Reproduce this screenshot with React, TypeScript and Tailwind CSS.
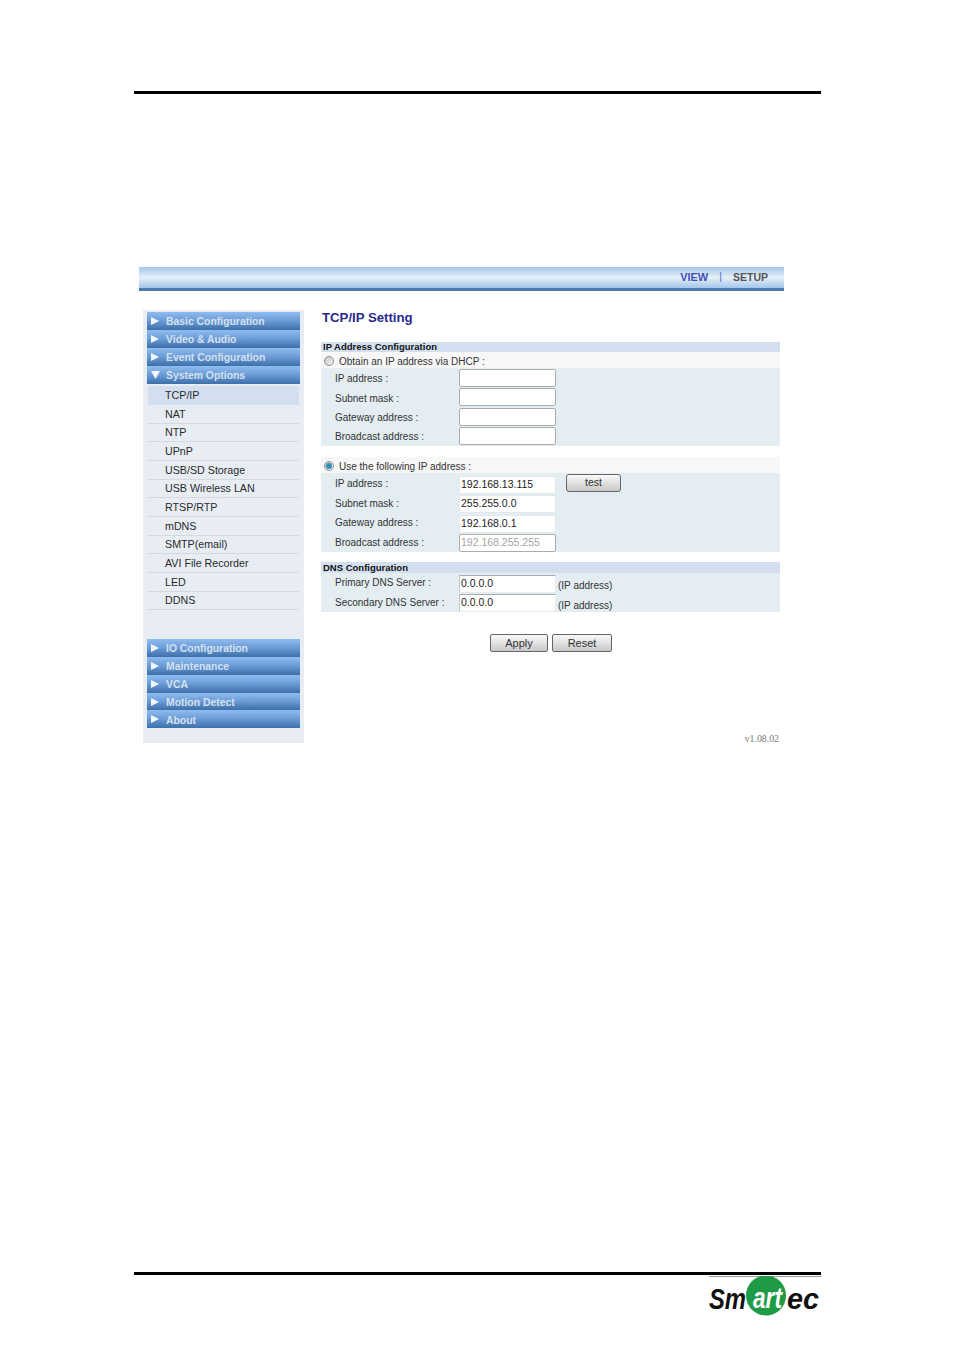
import React from 'react';

const topMenus = ['Basic Configuration', 'Video & Audio', 'Event Configuration'];
const subMenus = ['NAT', 'NTP', 'UPnP', 'USB/SD Storage', 'USB Wireless LAN', 'RTSP/RTP', 'mDNS', 'SMTP(email)', 'AVI File Recorder', 'LED', 'DDNS'];
const bottomMenus = ['IO Configuration', 'Maintenance', 'VCA', 'Motion Detect', 'About'];

const MenuHeader: React.FC<{ label: string; open?: boolean; short?: boolean }> = ({ label, open, short }) => (
  <div className={`flex items-center ${short ? 'h-[17.8px]' : 'h-[18px]'} w-[153px] pl-1 bg-gradient-to-b from-[#8fbcf0] via-[#6b9bd6] to-[#3d6fa9] text-[10.4px] font-bold text-[#d5e1ef]`}>
    {open ? (
      <svg width="9" height="8" viewBox="0 0 9 8" className="mr-[6px]"><path d="M0 0h9L4.5 8z" fill="#f2f6fb" /></svg>
    ) : (
      <svg width="8" height="8" viewBox="0 0 8 8" className="mr-[7px]"><path d="M0 0l8 4-8 4z" fill="#f2f6fb" /></svg>
    )}
    <span className="pt-[2px]">{label}</span>
  </div>
);

const Radio: React.FC<{ checked?: boolean }> = ({ checked }) => (
  <span className="flex items-center justify-center w-[10px] h-[10px] rounded-full border border-[#8a8f94] bg-gradient-to-br from-[#c4c8cc] to-[#f4f4f4] mr-[5px] ml-[3px] mt-[1px]">
    {checked && <span className="w-[6px] h-[6px] rounded-full bg-[#2f8fb8]" />}
  </span>
);

const Field: React.FC<{ label: string; value?: string; kind?: 'plain' | 'line' | 'boxed' | 'disabled'; labelClass?: string }> = ({ label, value, kind = 'boxed', labelClass = '' }) => {
  const styles = {
    boxed: 'border border-[#a9adaf] rounded-[2px] text-[#222]',
    disabled: 'border border-[#a9adaf] rounded-[2px] text-[#a5a5a5]',
    plain: 'border border-[#e3e8ea] text-[#222]',
    line: 'border border-[#e6ebed] border-t-[#a9adaf] border-l-[#c3c7c9] text-[#222]',
  };
  return (
    <div className="flex items-center h-[19.5px]">
      <span className={`w-[138px] pl-[14px] text-[10px] text-[#333] ${labelClass}`}>{label}</span>
      <div className={`flex items-center w-[97px] h-[18px] pl-[1px] bg-white ${styles[kind]}`}>{value}</div>
    </div>
  );
};

const SmartecLogo: React.FC = () => (
  <svg width="112" height="40" viewBox="0 0 112 40">
    <line x1="0" y1="0.5" x2="112" y2="0.5" stroke="#9a9a9a" strokeWidth="1" />
    <circle cx="57" cy="19.5" r="20" fill="#1f9a45" />
    <g fontFamily="'Liberation Sans', sans-serif" fontWeight="700" fontStyle="italic" fontSize="30">
      <text x="0" y="33" textLength="37" lengthAdjust="spacingAndGlyphs" fill="#111">Sm</text>
      <text x="44" y="32" textLength="29" lengthAdjust="spacingAndGlyphs" fill="#fff">art</text>
      <text x="78" y="33" textLength="32" lengthAdjust="spacingAndGlyphs" fill="#111">ec</text>
    </g>
  </svg>
);

const App: React.FC = () => {
  return (
    <div className="w-[954px] h-[1350px] bg-white overflow-hidden font-['Liberation_Sans',sans-serif] text-[10.5px]">
      <div className="ml-[134px] mt-[91px] w-[687px] h-[3px] bg-black" />

      <div className="ml-[139px] mt-[173px] w-[645px] h-[24px] flex items-center justify-end pr-4 pb-[1px] border-b-[3px] border-[#4a7bb0] bg-gradient-to-b from-[#a4c4e8] via-[#e6eff8] to-[#a4c5ea] text-[10.5px] font-bold">
        <span className="text-[#3f4fb5] text-[11px]">VIEW</span>
        <span className="mx-[11px] text-[#3f6fc0] font-normal">|</span>
        <span className="text-[#555] pt-[2px]">SETUP</span>
      </div>

      <div className="ml-[143px] mt-[19px] flex items-start">
        <aside className="w-[161px] h-[433px] bg-[#e8edf4] pl-1 pt-[2px]">
          {topMenus.map((m) => <MenuHeader key={m} label={m} />)}
          <MenuHeader label="System Options" open />
          <div className="w-[151px] ml-px mt-[2px] text-[#2a2a2a] text-[10.7px]">
            <div className="h-[19px] flex items-center pl-[17px] bg-[#d3dfee]">TCP/IP</div>
            {subMenus.map((s) => (
              <div key={s} className="h-[18.67px] flex items-center pl-[17px] border-b border-[#d5d8dc]">{s}</div>
            ))}
          </div>
          <div className="mt-[29px]">
            {bottomMenus.map((m) => <MenuHeader key={m} label={m} short />)}
          </div>
        </aside>

        <main className="ml-[17px] w-[459px]">
          <h1 className="pl-px h-[32px] pt-[1px] text-[13.2px] leading-[14px] font-bold text-[#2b2b8c]">TCP/IP Setting</h1>

          <div className="h-[10px] pl-[2px] bg-[#d3dfee] text-[9.5px] leading-[10px] font-bold text-[#111]">IP Address Configuration</div>
          <div className="h-[16px] flex items-center bg-[#f7f7f7] text-[10px] text-[#333]"><Radio /><span className="mt-[3px]">Obtain an IP address via DHCP :</span></div>
          <div className="h-[78px] bg-[#e3edf2]">
            <Field label="IP address :" labelClass="pt-[2px]" />
            <Field label="Subnet mask :" labelClass="pt-[2px]" />
            <Field label="Gateway address :" labelClass="pt-[2px]" />
            <Field label="Broadcast address :" labelClass="pt-[1px]" />
          </div>

          <div className="mt-[11px] h-[16px] flex items-center bg-[#f7f7f7] text-[10px] text-[#333]"><Radio checked /><span className="mt-[3px]">Use the following IP address :</span></div>
          <div className="h-[79px] pt-[2px] bg-[#e3edf2]">
            <div className="flex items-start">
              <Field label="IP address :" value="192.168.13.115" kind="plain" labelClass="pb-[2px]" />
              <button className="ml-[10px] -mt-px w-[55px] h-[18px] rounded-[3px] border border-[#666] bg-gradient-to-b from-[#fafafa] to-[#c8c8c8] text-[#333]">test</button>
            </div>
            <Field label="Subnet mask :" value="255.255.0.0" kind="plain" labelClass="pb-[2px]" />
            <Field label="Gateway address :" value="192.168.0.1" kind="plain" labelClass="pb-[2px]" />
            <Field label="Broadcast address :" value="192.168.255.255" kind="disabled" labelClass="pb-[2px]" />
          </div>

          <div className="mt-[10px] h-[11px] pl-[2px] bg-[#d3dfee] text-[9.5px] leading-[11px] font-bold text-[#111]">DNS Configuration</div>
          <div className="h-[39px] pt-px bg-[#e3edf2]">
            <div className="flex items-start">
              <Field label="Primary DNS Server :" value="0.0.0.0" kind="line" labelClass="pb-[2px]" />
              <span className="ml-[2px] mt-[4px] text-[10px] text-[#333]">(IP address)</span>
            </div>
            <div className="flex items-start">
              <Field label="Secondary DNS Server :" value="0.0.0.0" kind="line" labelClass="pb-[2px]" />
              <span className="ml-[2px] mt-[4px] text-[10px] text-[#333]">(IP address)</span>
            </div>
          </div>

          <div className="mt-[22px] pl-[169px] flex gap-1 text-[11px] text-[#333]">
            <button className="w-[58px] h-[18px] rounded-[2px] border border-[#666] bg-gradient-to-b from-[#fafafa] to-[#c8c8c8]">Apply</button>
            <button className="w-[60px] h-[18px] rounded-[2px] border border-[#666] bg-gradient-to-b from-[#fafafa] to-[#c8c8c8]">Reset</button>
          </div>

          <p className="mt-[81px] pr-px text-right font-['Liberation_Serif',serif] text-[9.8px] leading-[12px] text-[#777]">v1.08.02</p>
        </main>
      </div>

      <div className="ml-[134px] mt-[527px] w-[687px] h-[3px] bg-black" />
      <div className="ml-[709px] mt-px">
        <SmartecLogo />
      </div>
    </div>
  );
};

export default App;
